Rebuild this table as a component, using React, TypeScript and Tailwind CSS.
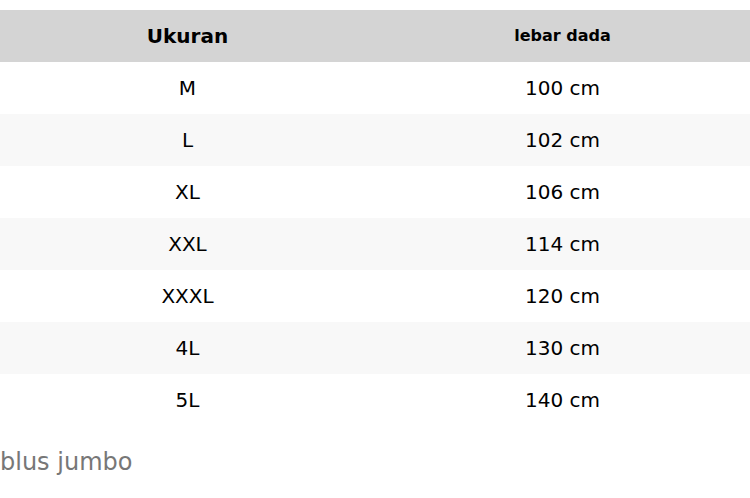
const rows = [
  ['M', '100 cm'],
  ['L', '102 cm'],
  ['XL', '106 cm'],
  ['XXL', '114 cm'],
  ['XXXL', '120 cm'],
  ['4L', '130 cm'],
  ['5L', '140 cm'],
]

export default function App() {
  return (
    <div className="min-h-[498px] bg-white pt-[10px] font-['DejaVu_Sans',sans-serif] text-black">
      <div className="grid grid-cols-2 h-[52px] items-center bg-[#d4d4d4] text-center font-bold">
        <div className="text-[20px]">Ukuran</div>
        <div className="text-[16px]">lebar dada</div>
      </div>
      {rows.map(([size, chest], i) => (
        <div
          key={size}
          className={`grid grid-cols-2 h-[52px] items-center text-center text-[20px] ${
            i % 2 === 1 ? 'bg-[#f8f8f8]' : 'bg-white'
          }`}
        >
          <div>{size}</div>
          <div>{chest}</div>
        </div>
      ))}
      <p className="mt-[20px] text-[24px] leading-[32px] text-[#777777]">blus jumbo</p>
    </div>
  )
}
